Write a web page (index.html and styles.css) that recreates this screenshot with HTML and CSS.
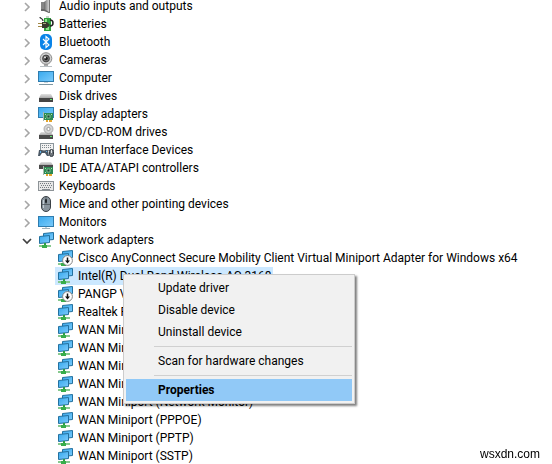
FILE: index.html
```html
<!DOCTYPE html>
<html lang="en">
<head>
    <meta charset="UTF-8">
    <title>Device Manager</title>
    <link rel="stylesheet" href="styles.css">
</head>
<body>
    <svg class="sprite" aria-hidden="true">
        <defs>
            <linearGradient id="screen" x1="0" y1="0" x2="1" y2="1">
                <stop offset="0" stop-color="#38a9ee"/>
                <stop offset="1" stop-color="#7ccbfb"/>
            </linearGradient>
            <linearGradient id="metal" x1="0" y1="0" x2="1" y2="0">
                <stop offset="0" stop-color="#6c6c6c"/>
                <stop offset="1" stop-color="#d2d2d2"/>
            </linearGradient>
            <linearGradient id="lid" x1="0" y1="0" x2="0" y2="1">
                <stop offset="0" stop-color="#e2e2e2"/>
                <stop offset="1" stop-color="#a9a9a9"/>
            </linearGradient>
        </defs>
        <symbol id="right" viewBox="0 0 8 10">
            <path d="M2 1l4 4-4 4" fill="none" stroke="#a6a6a6" stroke-width="1.6"/>
        </symbol>
        <symbol id="down" viewBox="0 0 10 8">
            <path d="M1 2l4 4 4-4" fill="none" stroke="#404040" stroke-width="1.7"/>
        </symbol>
        <symbol id="audio" viewBox="0 0 16 16">
            <path d="M3 4h3v8H3z" fill="#858585"/>
            <path d="M6 4l5-4v15l-5-3z" fill="url(#metal)"/>
            <path d="M11 0h1v15h-1z" fill="#777"/>
            <path d="M3 11h3l5 3v1l-5-2H3z" fill="#666"/>
        </symbol>
        <symbol id="battery" viewBox="0 0 16 16">
            <path d="M6 2h7v13H6z" fill="#2e9e3d"/>
            <path d="M8 0h3v2H8z" fill="#c9d5c9"/>
            <path d="M7 3h2v4H7zM8 11h3v3H8z" fill="#8fe08a"/>
            <path d="M12 4c4 0 4 6 0 6" fill="none" stroke="#222" stroke-width="1.5"/>
            <path d="M2 1c0 2 3 1 3 4" fill="none" stroke="#333" stroke-width="1.3"/>
            <path d="M4 6h5l3 3-3 3H4z" fill="#39392f"/>
            <path d="M5 7h3v1H5z" fill="#aaa87d"/>
            <path d="M0 7h4v1H0zM0 10h4v1H0z" fill="#a08745"/>
        </symbol>
        <symbol id="bluetooth" viewBox="0 0 16 16">
            <rect x="2" y="0" width="12" height="16" rx="5" fill="#0a84e8"/>
            <path d="M5 5l6 6-3 2.5v-11L11 5l-6 6" fill="none" stroke="#fff" stroke-width="1.1"/>
        </symbol>
        <symbol id="camera" viewBox="0 0 16 16">
            <path d="M6 12h4v2H6z" fill="#aaa"/>
            <path d="M2 14h12v1H2z" fill="#b9c0c4"/>
            <circle cx="8" cy="6.5" r="5.8" fill="#d2d2d2" stroke="#8c8c8c"/>
            <circle cx="8" cy="6.5" r="3.4" fill="#707070" stroke="#404040"/>
            <circle cx="8" cy="6.5" r="1.8" fill="#202020"/>
            <circle cx="7" cy="5.5" r="1" fill="#e5e5e5"/>
        </symbol>
        <symbol id="computer" viewBox="0 0 16 16">
            <rect x=".5" y="1.5" width="15" height="10" fill="url(#screen)" stroke="#2f7cae"/>
            <path d="M6 12h4v1H6z" fill="#c8d4da"/>
            <path d="M1 14h14v1H1z" fill="#7f97a2"/>
        </symbol>
        <symbol id="disk" viewBox="0 0 16 16">
            <path d="M3 6h10l2 4H1z" fill="url(#lid)"/>
            <path d="M1 10h14v4H1z" fill="#454545"/>
            <path d="M12 11h2v1h-2z" fill="#62e36a"/>
        </symbol>
        <symbol id="card" viewBox="0 0 16 16">
            <path d="M6 7h9v7H6z" fill="#2c8a52"/>
            <path d="M5 6h1v9H5z" fill="#a9b9ae"/>
            <path d="M9 9h3v3H9z" fill="#194b37" stroke="#9bd3a6" stroke-width=".7"/>
            <path d="M7 8h1v1H7zM13 8h1v1h-1zM7 12h1v1H7z" fill="#b4dfb1"/>
            <path d="M8 14h2v2H8zM11 14h3v2h-3z" fill="#e3a52c"/>
        </symbol>
        <symbol id="display" viewBox="0 0 16 16">
            <rect x=".5" y="1.5" width="15" height="10" fill="url(#screen)" stroke="#2f7cae"/>
            <use href="#card"/>
        </symbol>
        <symbol id="dvd" viewBox="0 0 16 16">
            <path d="M3 8h10l2 3H1z" fill="url(#lid)"/>
            <circle cx="10.5" cy="5" r="4.5" fill="#d5d5d5" stroke="#9b9b9b" stroke-width=".8"/>
            <circle cx="10.5" cy="5" r="1.6" fill="#fff" stroke="#8b8b8b" stroke-width=".8"/>
            <path d="M1 11h14v4H1z" fill="#4a4a4a"/>
            <path d="M12 12h2v1h-2z" fill="#62e36a"/>
        </symbol>
        <symbol id="hid" viewBox="0 0 16 16">
            <rect x="2.5" y="1.5" width="13" height="7" fill="#f2f2f2" stroke="#8c969c"/>
            <path d="M4 3.5h10M4 5.5h10" stroke="#7d878d" stroke-dasharray="1 1"/>
            <path d="M0 14l1-6h3l1 1h2l1-1h2l1 6H9l-2-3H4l-2 3z" fill="#4b5966"/>
            <path d="M2 9h1v2H2zM8 9h1v1H8z" fill="#5bb1e8"/>
            <rect x="11.5" y="7.5" width="4" height="7" rx="2" fill="#6d747a" stroke="#343b42"/>
            <path d="M13 8h1v3h-1z" fill="#e0e5e8"/>
        </symbol>
        <symbol id="ide" viewBox="0 0 16 16">
            <path d="M3 2h10l2 3H1z" fill="url(#lid)"/>
            <path d="M1 5h14v4H1z" fill="#4a4a4a"/>
            <use href="#card"/>
        </symbol>
        <symbol id="keyboard" viewBox="0 0 16 16">
            <rect x=".5" y="3.5" width="15" height="9" fill="#e8e8e8" stroke="#8d9397"/>
            <path d="M2 5.5h12M3 7.5h11M2 9.5h12" stroke="#747b80" stroke-dasharray="1 1"/>
            <path d="M4 11.5h8" stroke="#858b90"/>
        </symbol>
        <symbol id="mouse" viewBox="0 0 16 16">
            <rect x="3.5" y=".5" width="9" height="15" rx="4.5" fill="#89949d" stroke="#3b4146"/>
            <path d="M5.5 4v8" stroke="#c4cdd4"/>
            <path d="M8 1v7M4 8.5h8" stroke="#4c555c" stroke-width=".8"/>
            <rect x="7" y="3" width="2" height="4" rx="1" fill="#23282c"/>
        </symbol>
        <symbol id="monitor" viewBox="0 0 16 16">
            <rect x=".5" y="2.5" width="15" height="10" fill="url(#screen)" stroke="#2f7cae"/>
            <path d="M7 13h2v1H7z" fill="#c8d4da"/>
            <path d="M4 14h8v1H4z" fill="#9fb0b9"/>
        </symbol>
        <symbol id="network" viewBox="0 0 16 16">
            <path d="M5.5 1.5l10-1v7l-10 1z" fill="url(#screen)" stroke="#23719f"/>
            <path d="M1.500 4.500l10-1v7l-10 1z" fill="url(#screen)" stroke="#23719f"/>
            <path d="M6 11h2v3H6z" fill="#2e9e45"/>
            <path d="M1 13h12v2H1z" fill="#86c98e"/>
            <path d="M4 13h5v3H4z" fill="#38ad4b"/>
        </symbol>
        <symbol id="disabled" viewBox="0 0 16 16">
            <use href="#network"/>
            <circle cx="10.5" cy="10.5" r="4.9" fill="#fff" stroke="#777" stroke-width=".9"/>
            <path d="M10.5 7.500v4" stroke="#111" stroke-width="1.5"/>
            <path d="M8 10.500h5l-2.500 3z" fill="#111"/>
        </symbol>
    </svg>

    <ul class="tree">
        <li><div class="row"><button class="toggle" aria-label="Expand"><svg><use href="#right"/></svg></button><svg class="icon"><use href="#audio"/></svg><span>Audio inputs and outputs</span></div></li>
        <li><div class="row"><button class="toggle" aria-label="Expand"><svg><use href="#right"/></svg></button><svg class="icon"><use href="#battery"/></svg><span>Batteries</span></div></li>
        <li><div class="row"><button class="toggle" aria-label="Expand"><svg><use href="#right"/></svg></button><svg class="icon"><use href="#bluetooth"/></svg><span>Bluetooth</span></div></li>
        <li><div class="row"><button class="toggle" aria-label="Expand"><svg><use href="#right"/></svg></button><svg class="icon"><use href="#camera"/></svg><span>Cameras</span></div></li>
        <li><div class="row"><button class="toggle" aria-label="Expand"><svg><use href="#right"/></svg></button><svg class="icon"><use href="#computer"/></svg><span>Computer</span></div></li>
        <li><div class="row"><button class="toggle" aria-label="Expand"><svg><use href="#right"/></svg></button><svg class="icon"><use href="#disk"/></svg><span>Disk drives</span></div></li>
        <li><div class="row"><button class="toggle" aria-label="Expand"><svg><use href="#right"/></svg></button><svg class="icon"><use href="#display"/></svg><span>Display adapters</span></div></li>
        <li><div class="row"><button class="toggle" aria-label="Expand"><svg><use href="#right"/></svg></button><svg class="icon"><use href="#dvd"/></svg><span>DVD/CD-ROM drives</span></div></li>
        <li><div class="row"><button class="toggle" aria-label="Expand"><svg><use href="#right"/></svg></button><svg class="icon"><use href="#hid"/></svg><span>Human Interface Devices</span></div></li>
        <li><div class="row"><button class="toggle" aria-label="Expand"><svg><use href="#right"/></svg></button><svg class="icon"><use href="#ide"/></svg><span>IDE ATA/ATAPI controllers</span></div></li>
        <li><div class="row"><button class="toggle" aria-label="Expand"><svg><use href="#right"/></svg></button><svg class="icon"><use href="#keyboard"/></svg><span>Keyboards</span></div></li>
        <li><div class="row"><button class="toggle" aria-label="Expand"><svg><use href="#right"/></svg></button><svg class="icon"><use href="#mouse"/></svg><span>Mice and other pointing devices</span></div></li>
        <li><div class="row"><button class="toggle" aria-label="Expand"><svg><use href="#right"/></svg></button><svg class="icon"><use href="#monitor"/></svg><span>Monitors</span></div></li>
        <li>
            <div class="row"><button class="toggle" aria-label="Collapse"><svg><use href="#down"/></svg></button><svg class="icon"><use href="#network"/></svg><span>Network adapters</span></div>
            <ul class="children">
                <li><div class="row"><svg class="icon"><use href="#disabled"/></svg><span>Cisco AnyConnect Secure Mobility Client Virtual Miniport Adapter for Windows x64</span></div></li>
                <li class="has-menu">
                    <div class="row selected"><svg class="icon"><use href="#network"/></svg><span>Intel(R) Dual Band Wireless-AC 3168</span></div>
                    <div class="menu" role="menu">
                        <button role="menuitem">Update driver</button>
                        <button role="menuitem">Disable device</button>
                        <button role="menuitem">Uninstall device</button>
                        <hr>
                        <button role="menuitem">Scan for hardware changes</button>
                        <hr>
                        <button role="menuitem" class="active">Properties</button>
                    </div>
                </li>
                <li><div class="row"><svg class="icon"><use href="#disabled"/></svg><span>PANGP V</span></div></li>
                <li><div class="row"><svg class="icon"><use href="#network"/></svg><span>Realtek P</span></div></li>
                <li><div class="row"><svg class="icon"><use href="#network"/></svg><span>WAN Mini</span></div></li>
                <li><div class="row"><svg class="icon"><use href="#network"/></svg><span>WAN Mini</span></div></li>
                <li><div class="row"><svg class="icon"><use href="#network"/></svg><span>WAN Mini</span></div></li>
                <li><div class="row"><svg class="icon"><use href="#network"/></svg><span>WAN Mini</span></div></li>
                <li><div class="row"><svg class="icon"><use href="#network"/></svg><span>WAN Miniport (Network Monitor)</span></div></li>
                <li><div class="row"><svg class="icon"><use href="#network"/></svg><span>WAN Miniport (PPPOE)</span></div></li>
                <li><div class="row"><svg class="icon"><use href="#network"/></svg><span>WAN Miniport (PPTP)</span></div></li>
                <li><div class="row"><svg class="icon"><use href="#network"/></svg><span>WAN Miniport (SSTP)</span></div></li>
            </ul>
        </li>
    </ul>
    <div class="watermark">wsxdn.com</div>
</body>
</html>
```
FILE: styles.css
```css
body {margin: 0; background: #fff; color: #000; font-family: Roboto, "Open Sans", sans-serif; font-size: 12px; overflow: hidden;}
.sprite {position: absolute; width: 0; height: 0;}
ul {list-style: none; margin: 0; padding: 0;}

/* device tree, scrolled a little past its first row */
.tree {margin-top: -3px; padding-left: 21px;}
.row {display: flex; align-items: center; width: max-content; height: 18px; line-height: 18px; white-space: nowrap;}
.toggle {display: flex; align-items: center; justify-content: center; width: 12px; height: 18px; margin-right: 5px; padding: 2px 0 0; border: none; background: none;}
.toggle svg {width: 10px; height: 10px;}
.icon {width: 16px; height: 16px; margin-right: 5px;}
.children {padding-left: 34px;}
.children .row {padding: 0 2px;}
.selected {background: #cce8ff;}

/* context menu */
.has-menu {position: relative;}
.menu {position: absolute; top: 7px; left: 68px; z-index: 1; box-sizing: border-box; width: 232px; padding: 2px; border: 1px solid #ccc; background: #f1f1f1; box-shadow: 2px 2px 2px rgba(0, 0, 0, 0.5);}
.menu button {display: block; width: 100%; height: 22px; padding: 0 0 0 32px; border: none; background: none; color: #000; font: inherit; line-height: 22px; text-align: left;}
.menu .active {background: #91c9f7; font-weight: bold;}
.menu hr {height: 1px; margin: 3px 0 3px 28px; border: none; background: #d0d0d0;}

.watermark {position: fixed; right: 12px; bottom: 2px; font-family: "Liberation Sans", Arial, sans-serif; font-size: 12px; line-height: 16px;}
```
